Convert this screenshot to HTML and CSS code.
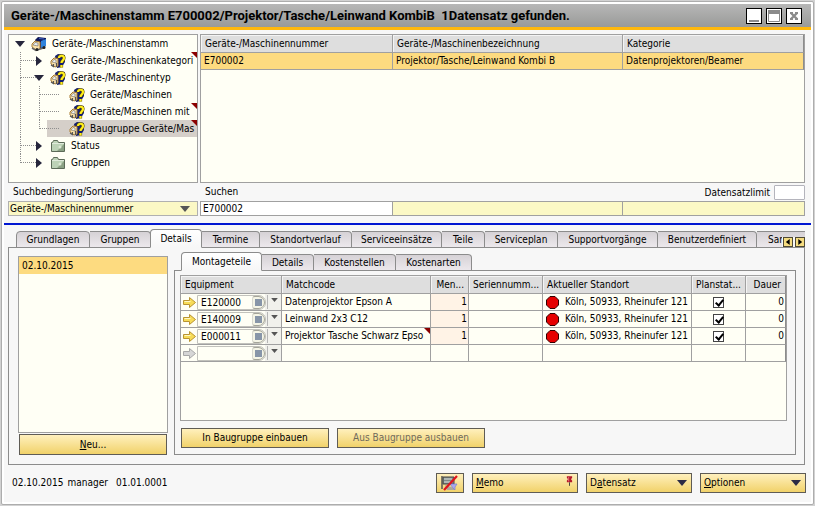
FILE: index.html
```html
<!DOCTYPE html>
<html lang="de">
<head>
<meta charset="utf-8">
<title>Geräte-/Maschinenstamm</title>
<link rel="stylesheet" href="styles.css">
</head>
<body>
<svg class="defs" aria-hidden="true">
  <symbol id="truck" viewBox="0 0 16 16">
    <path d="M4 4 7 1 15 2v8l-6 3-4-3z" fill="#10185a"/>
    <path d="M10 5 15 3v7l-5 2z" fill="#2f83dc"/>
    <path d="M8 2.500 13 3" stroke="#3c62c4"/>
    <path d="M1 8 4 5 9 6v7l-4 1-4-3z" fill="#fbe3ac" stroke="#a87b31"/>
    <path d="M2 9 4 6.500 7 7v3z" fill="#e4edf4" stroke="#74685a" stroke-width=".6"/>
    <path d="M1 12l4 2.500 9-3" fill="none" stroke="#666" stroke-width="1.500"/>
    <circle cx="6" cy="13.500" r="1.500" fill="#222"/><circle cx="13" cy="11.500" r="1.500" fill="#222"/>
  </symbol>
  <symbol id="truckq" viewBox="0 0 16 16">
    <path d="M5 3 8 1l7 1v7l-3 5-5 1z" fill="#16206e"/>
    <path d="M1 8 4 5l4 .5V13l-3 1-4-3z" fill="#fbe3ac" stroke="#a87b31"/>
    <path d="M2 9 4 6.500 6 7v3z" fill="#eef2f4" stroke="#74685a" stroke-width=".6"/>
    <path d="M3.500 11v3M6.500 10v4M1 12l3 2" stroke="#555" stroke-width="1.200"/>
    <path d="M9 5C9 2 14 2 14 5 14 7.500 11.500 7.500 11.500 10M11.500 12v2.500" fill="none" stroke="#5c4d00" stroke-width="3.200"/>
    <path d="M9 5C9 2 14 2 14 5 14 7.500 11.500 7.500 11.500 10M11.500 12v2.500" fill="none" stroke="#ffee1c" stroke-width="2.200"/>
  </symbol>
  <symbol id="folder" viewBox="0 0 16 16">
    <path d="M1.500 4.500h1l1-2h4l1 2h6v9h-13z" fill="#bcd2b6" stroke="#5c6b58"/>
    <path d="M7 13 14 6v7z" fill="#8ba184"/><path d="M2 5.500h12" stroke="#dfeadb"/>
    <circle cx="10" cy="9" r="1.500" fill="#dce8d4"/>
  </symbol>
  <symbol id="down" viewBox="0 0 10 6"><path d="M0 0h10L5 6z" fill="currentColor"/></symbol>
  <symbol id="right" viewBox="0 0 6 10"><path d="M0 0 6 5 0 10z" fill="currentColor"/></symbol>
  <symbol id="link" viewBox="0 0 13 11"><path d="M.5 3.500h6v-3l6 5-6 5v-3h-6z" fill="currentColor" stroke="#b99432"/><path d="M1.500 4.500h6" stroke="#fff8c4"/></symbol>
  <symbol id="linkoff" viewBox="0 0 13 11"><path d="M.5 3.500h6v-3l6 5-6 5v-3h-6z" fill="#d6d6d6" stroke="#a8a8a8"/></symbol>
  <symbol id="stop" viewBox="0 0 13 13"><path d="M4 .5h5L12.500 4v5L9 12.500H4L.5 9V4z" fill="#e60000" stroke="#300"/></symbol>
</svg>

<main class="window">
  <header class="titlebar">
    <h1>Geräte-/Maschinenstamm E700002/Projektor/Tasche/Leinwand KombiB&nbsp; 1Datensatz gefunden.</h1>
    <div class="controls">
      <button type="button" aria-label="Minimieren"><svg viewBox="0 0 14 14"><path d="M2 11h10v2H2z" fill="#8b8b8b"/></svg></button>
      <button type="button" aria-label="Maximieren"><svg viewBox="0 0 14 14"><path d="M1.500 1.500h11v11h-11z" fill="none" stroke="#8b8b8b"/><path d="M1 1h12v4H1z" fill="#8b8b8b"/></svg></button>
      <button type="button" aria-label="Schließen"><svg viewBox="0 0 14 14"><path d="M4 4l6 6M10 4l-6 6" stroke="#8b8b8b" stroke-width="2.400"/><path d="M3 3h3v2H3zM8 3h3v2H8zM3 9h3v2H3zM8 9h3v2H8z" fill="#8b8b8b"/></svg></button>
    </div>
  </header>

  <section class="overview">
    <nav class="tree box" aria-label="Navigation">
      <ul>
        <li><div class="node"><span class="tw"><svg class="down"><use href="#down"/></svg></span><svg class="ico"><use href="#truck"/></svg><span>Geräte-/Maschinenstamm</span></div>
          <ul>
            <li><div class="node more"><span class="tw"><svg class="right"><use href="#right"/></svg></span><svg class="ico"><use href="#truckq"/></svg><span>Geräte-/Maschinenkategori</span></div></li>
            <li><div class="node"><span class="tw"><svg class="down"><use href="#down"/></svg></span><svg class="ico"><use href="#truckq"/></svg><span>Geräte-/Maschinentyp</span></div>
              <ul>
                <li class="leaf"><div class="node"><span class="tw"></span><svg class="ico"><use href="#truckq"/></svg><span>Geräte/Maschinen</span></div></li>
                <li class="leaf"><div class="node more"><span class="tw"></span><svg class="ico"><use href="#truckq"/></svg><span>Geräte/Maschinen mit</span></div></li>
                <li class="leaf"><div class="node more selected"><span class="tw"></span><svg class="ico"><use href="#truckq"/></svg><span>Baugruppe Geräte/Mas</span></div></li>
              </ul>
            </li>
            <li><div class="node"><span class="tw"><svg class="right"><use href="#right"/></svg></span><svg class="ico"><use href="#folder"/></svg><span>Status</span></div></li>
            <li><div class="node"><span class="tw"><svg class="right"><use href="#right"/></svg></span><svg class="ico"><use href="#folder"/></svg><span>Gruppen</span></div></li>
          </ul>
        </li>
      </ul>
    </nav>
    <div class="results box">
      <table>
        <colgroup><col class="c-number"><col class="c-name"><col></colgroup>
        <thead><tr><th>Geräte-/Maschinennummer</th><th>Geräte-/Maschinenbezeichnung</th><th>Kategorie</th></tr></thead>
        <tbody><tr class="hit"><td>E700002</td><td>Projektor/Tasche/Leinwand Kombi B</td><td>Datenprojektoren/Beamer</td></tr></tbody>
      </table>
    </div>

    <label class="caption" for="sort">Suchbedingung/Sortierung</label>
    <div class="caption search-caption">
      <label for="q">Suchen</label>
      <span class="limit"><label for="limit">Datensatzlimit</label><input id="limit" type="text"></span>
    </div>
    <div class="combo"><select id="sort"><option>Geräte-/Maschinennummer</option></select><svg class="down"><use href="#down"/></svg></div>
    <div class="search">
      <input id="q" type="text" value="E700002">
      <input type="text" aria-label="Geräte-/Maschinenbezeichnung" class="tinted">
      <input type="text" aria-label="Kategorie" class="tinted">
    </div>
  </section>

  <section class="detail">
    <div class="tabs main-tabs" role="tablist">
      <button type="button" role="tab">Grundlagen</button>
      <button type="button" role="tab">Gruppen</button>
      <button type="button" role="tab" aria-selected="true">Details</button>
      <button type="button" role="tab">Termine</button>
      <button type="button" role="tab">Standortverlauf</button>
      <button type="button" role="tab">Serviceeinsätze</button>
      <button type="button" role="tab">Teile</button>
      <button type="button" role="tab">Serviceplan</button>
      <button type="button" role="tab">Supportvorgänge</button>
      <button type="button" role="tab">Benutzerdefiniert</button>
      <button type="button" role="tab" class="cut">Sar</button>
      <span class="scroll">
        <button type="button" aria-label="Zurück"><svg viewBox="0 0 7 7"><path d="M5.500 0v7L1 3.500z"/></svg></button>
        <button type="button" aria-label="Weiter"><svg viewBox="0 0 7 7"><path d="M1.500 0v7L6 3.500z"/></svg></button>
      </span>
    </div>

    <div class="panel">
      <div class="dates">
        <ul class="box"><li>02.10.2015</li></ul>
        <button type="button" class="btn"><u>N</u>eu...</button>
      </div>

      <div class="assembly">
        <div class="tabs sub-tabs" role="tablist">
          <button type="button" role="tab" aria-selected="true">Montageteile</button>
          <button type="button" role="tab">Details</button>
          <button type="button" role="tab">Kostenstellen</button>
          <button type="button" role="tab">Kostenarten</button>
        </div>
        <div class="subpanel">
          <div class="parts box">
            <table>
              <colgroup><col class="p-equip"><col class="p-match"><col class="p-qty"><col class="p-serial"><col><col class="p-plan"><col class="p-time"></colgroup>
              <thead><tr><th>Equipment</th><th>Matchcode</th><th class="num">Men...</th><th>Seriennumm...</th><th>Aktueller Standort</th><th>Planstat...</th><th class="num">Dauer</th></tr></thead>
              <tbody>
                <tr>
                  <td class="equip"><div><svg class="link"><use href="#link"/></svg><span class="field"><input type="text" aria-label="Equipment 1" value="E120000"><button type="button" class="pick" aria-label="Auswählen"></button></span><button type="button" class="drop" aria-label="Liste"><svg><use href="#down"/></svg></button></div></td>
                  <td>Datenprojektor Epson A</td><td class="num qty">1</td><td></td>
                  <td><span class="place"><svg><use href="#stop"/></svg>Köln, 50933, Rheinufer 121</span></td>
                  <td class="check"><input type="checkbox" aria-label="Planstatus 1" checked></td><td class="num">0</td>
                </tr>
                <tr>
                  <td class="equip"><div><svg class="link"><use href="#link"/></svg><span class="field"><input type="text" aria-label="Equipment 2" value="E140009"><button type="button" class="pick" aria-label="Auswählen"></button></span><button type="button" class="drop" aria-label="Liste"><svg><use href="#down"/></svg></button></div></td>
                  <td>Leinwand 2x3 C12</td><td class="num qty">1</td><td></td>
                  <td><span class="place"><svg><use href="#stop"/></svg>Köln, 50933, Rheinufer 121</span></td>
                  <td class="check"><input type="checkbox" aria-label="Planstatus 2" checked></td><td class="num">0</td>
                </tr>
                <tr>
                  <td class="equip"><div><svg class="link"><use href="#link"/></svg><span class="field"><input type="text" aria-label="Equipment 3" value="E000011"><button type="button" class="pick" aria-label="Auswählen"></button></span><button type="button" class="drop" aria-label="Liste"><svg><use href="#down"/></svg></button></div></td>
                  <td class="more">Projektor Tasche Schwarz Epso</td><td class="num qty">1</td><td></td>
                  <td><span class="place"><svg><use href="#stop"/></svg>Köln, 50933, Rheinufer 121</span></td>
                  <td class="check"><input type="checkbox" aria-label="Planstatus 3" checked></td><td class="num">0</td>
                </tr>
                <tr>
                  <td class="equip"><div><svg class="link"><use href="#linkoff"/></svg><span class="field"><input type="text" aria-label="Equipment 4"><button type="button" class="pick" aria-label="Auswählen"></button></span><button type="button" class="drop" aria-label="Liste"><svg><use href="#down"/></svg></button></div></td>
                  <td></td><td></td><td></td><td></td><td></td><td></td>
                </tr>
              </tbody>
            </table>
          </div>
          <div class="actions">
            <button type="button" class="btn">In Baugruppe einbauen</button>
            <button type="button" class="btn" disabled>Aus Baugruppe ausbauen</button>
          </div>
        </div>
      </div>
    </div>
  </section>

  <footer class="footer">
    <p><span>02.10.2015</span><span>manager</span><span class="last">01.01.0001</span></p>
    <button type="button" class="btn icon" aria-label="Filter aus">
      <svg viewBox="0 0 18 16"><path d="M1 1v13" stroke="#555" stroke-width="1.500"/><path d="M2 2h11v7H2z" fill="#7f8a88" stroke="#444"/><path d="M3 4h8M3 7h6" stroke="#dfe4e0"/><path d="M4 10l9 3v2H6z" fill="#aaa79a"/><path d="M9 9h7l-2 3v3l-2-2z" fill="#a9a9f0" stroke="#7d7dcc" stroke-width=".7"/><path d="M16 1 3 15" stroke="#e0141e" stroke-width="2.200"/></svg>
    </button>
    <button type="button" class="btn menu"><span><u>M</u>emo</span><svg class="pin" viewBox="0 0 8 11"><path d="M1 0h6v2L6 3v1l1 1v2H1V5l1-1V3L1 2z" fill="#b51a2a"/><path d="M3 1v5" stroke="#ee7781"/><path d="M4 7v4" stroke="#333"/></svg></button>
    <button type="button" class="btn menu"><span>D<u>a</u>tensatz</span><svg class="down"><use href="#down"/></svg></button>
    <button type="button" class="btn menu"><span><u>O</u>ptionen</span><svg class="down"><use href="#down"/></svg></button>
  </footer>
</main>
</body>
</html>
```
FILE: styles.css
```css
:root {
  --line: #a0a0a0;
  --edge: #8c8c8c;
  --face: #f7f7f7;
  --paper: #fffff5;
  --amber: #fddb80;
}
* { box-sizing: border-box; }
body {
  margin: 0;
  padding: 1px;
  min-height: 100vh;
  display: flex;
  background: #d2d2d2;
  color: #000;
  font: 10px/16px "DejaVu Sans Condensed", "DejaVu Sans", sans-serif;
}
button, input, select { font: inherit; color: inherit; margin: 0; border-radius: 0; }
ul, p, h1 { margin: 0; padding: 0; }
ul { list-style: none; }
svg { display: block; flex: none; }
.defs { position: absolute; width: 0; height: 0; }

.window {
  flex: 1;
  min-width: 0;
  display: flex;
  flex-direction: column;
  padding: 2px;
  border: 1px solid #adadad;
  border-radius: 2px;
  background: var(--face);
  box-shadow: inset 0 0 0 2px #fff;
}
.titlebar {
  display: flex;
  align-items: center;
  justify-content: space-between;
  height: 26px;
  padding: 0 9px 0 7px;
  border-bottom: 3px solid #ffb80c;
  background: linear-gradient(#b7b7b7, #999a98);
}
.titlebar h1 { font-family: Roboto, sans-serif; font-size: 13px; font-weight: bold; white-space: nowrap; }
.controls { display: flex; gap: 4px; }
.controls button { width: 16px; height: 16px; padding: 0; border: 1px solid #000; background: #fff; }
.controls svg { width: 14px; height: 14px; }

.box { border: 1px solid var(--line); background: var(--paper); overflow: hidden; }
.down { width: 10px; height: 6px; }
.right { width: 6px; height: 10px; }

.overview {
  display: grid;
  grid-template-columns: 190px 1fr;
  grid-template-rows: 149px 18px 15px;
  column-gap: 2px;
  padding: 4px 6px 7px 4px;
  border-bottom: 2px solid #0016d2;
}

.tree { padding: 0 0 0 3px; color: #000; }
.tree ul ul { padding-left: 19px; }
.tree li { position: relative; }
.node { display: flex; align-items: center; height: 17px; white-space: nowrap; position: relative; }
.node .tw { flex: none; width: 16px; display: flex; justify-content: center; color: #26263c; margin-right: 3px; }
.ico { width: 16px; height: 16px; margin-right: 5px; }
.tree li li::before {
  content: "";
  position: absolute;
  z-index: 1;
  left: -11px;
  top: 0;
  width: 15px;
  height: 8px;
  border-left: 1px dotted #8e8e8e;
  border-bottom: 1px dotted #8e8e8e;
}
.tree li.leaf::before { width: 19px; }
.tree li li:not(:last-child)::after {
  content: "";
  position: absolute;
  left: -11px;
  top: 8px;
  bottom: 0;
  border-left: 1px dotted #8e8e8e;
}
.node.selected { margin-left: -3px; padding-left: 3px; background: #d5cfc9; }
.more { position: relative; }
.more::after {
  content: "";
  position: absolute;
  right: 0;
  top: 0;
  border-top: 6px solid #8b0000;
  border-left: 6px solid transparent;
}

table { width: 100%; border-collapse: separate; border-spacing: 0; table-layout: fixed; }
th, td {
  height: 17px;
  padding: 0 3px;
  border-right: 1px solid var(--line);
  border-bottom: 1px solid var(--line);
  text-align: left;
  font-weight: normal;
  white-space: nowrap;
  overflow: hidden;
  line-height: 16px;
}
th { height: 18px; padding: 0 0 0 4px; background: #dedede; box-shadow: inset 1px 1px #f4f4f4; }
th:last-child, td:last-child { border-right-color: var(--edge); }
.hit td { background: var(--amber); }
.c-number { width: 192px; }
.c-name { width: 230px; }

.caption { padding-left: 5px; line-height: 18px; }
.search-caption { display: flex; justify-content: space-between; }
.limit { display: flex; align-items: center; gap: 4px; padding-top: 1px; }
.limit input { width: 31px; height: 15px; padding: 0 2px; border: 1px solid #b4b4bc; border-radius: 1px; background: #fff; }
.combo { display: flex; align-items: center; border: 1px solid #b0b0b0; background: #fbf8c5; padding-right: 7px; color: #555; }
.combo select {
  flex: 1;
  height: 13px;
  padding: 0 1px;
  border: 0;
  background: none;
  appearance: none;
  color: #000;
  line-height: 13px;
}
.search { display: grid; grid-template-columns: 192px 230px 1fr; }
.search input { min-width: 0; height: 15px; padding: 0 2px; border: 1px solid var(--line); border-right-width: 0; background: #fff; line-height: 13px; }
.search input.tinted { background: #fbf8c5; }
.search input:last-child { border-right-width: 1px; }

.detail { flex: 1; display: flex; flex-direction: column; padding: 4px 6px 0 4px; }
.tabs { position: relative; z-index: 1; display: grid; align-items: end; height: 19px; margin-bottom: -1px; }
.main-tabs { grid-template-columns: 74px 61px 51px 58px 92px 90px 43px 73px 100px 99px 1fr; padding-left: 8px; }
.sub-tabs { grid-template-columns: 80px 52px 82px 76px; padding-left: 8px; }
.tabs [role="tab"] {
  height: 17px;
  padding: 0;
  border: 1px solid var(--edge);
  border-left-width: 0;
  border-radius: 0 4px 0 0;
  background: linear-gradient(#d6d2d6, #ece8ec);
  line-height: 13px;
  text-align: center;
  white-space: nowrap;
  overflow: hidden;
}
.tabs [role="tab"]:first-child { border-left-width: 1px; border-radius: 4px 4px 0 0; }
.tabs [aria-selected="true"] {
  height: 19px;
  margin-left: -1px;
  border-left-width: 1px;
  border-bottom-color: var(--face);
  border-radius: 4px 4px 0 0;
  background: linear-gradient(#fff, var(--face));
}
.tabs .cut { text-align: left; padding-left: 11px; border-right-width: 0; border-radius: 0; }
.scroll { position: absolute; right: 0; bottom: 1px; display: flex; gap: 2px; padding-left: 1px; background: var(--face); }
.scroll button { width: 10px; height: 10px; padding: 0 1px; border: 1px solid #4f4a35; background: #f5dc80; }
.scroll svg { width: 6px; height: 8px; }

.panel {
  flex: 1;
  display: grid;
  grid-template-columns: 150px 1fr;
  column-gap: 6px;
  padding: 4px 8px 9px 9px;
  border: 1px solid var(--edge);
}
.dates { display: flex; flex-direction: column; padding-top: 4px; }
.dates ul { flex: 1; padding: 0; }
.dates li { height: 17px; padding-left: 3px; line-height: 17px; background: var(--amber); }
.dates .btn { height: 21px; margin: 1px 1px 0; }
.assembly { min-width: 0; display: flex; flex-direction: column; }
.subpanel { flex: 1; display: flex; flex-direction: column; padding: 4px 8px 6px 5px; border: 1px solid var(--edge); }
.parts { flex: 1; }
.p-equip { width: 101px; }
.p-match { width: 149px; }
.p-qty { width: 38px; }
.p-serial { width: 74px; }
.p-plan { width: 54px; }
.p-time { width: 40px; }
.num { text-align: right; padding-right: 1px; }
th.num { padding-right: 4px; }
.qty { background: #fff3e6; }
.equip { padding: 0; background: #f1f1ec; }
.equip > div { display: flex; align-items: center; height: 16px; padding-left: 2px; background: linear-gradient(90deg, var(--paper) 84px, transparent 84px); }
.link { width: 13px; height: 11px; color: #f7dc57; margin-right: 1px; }
.field { display: flex; width: 69px; height: 15px; border: 1px solid #c2c2bc; background: var(--paper); border-radius: 0 7px 7px 0; }
.field input { flex: 1; min-width: 0; padding: 0 3px; border: 0; background: none; line-height: 13px; }
.pick { width: 13px; height: 13px; padding: 0; border: 1px solid #a5a59a; border-left-color: #d8d8d0; border-radius: 3px 7px 7px 3px; background: linear-gradient(#8795a8, #8795a8) center/7px 7px no-repeat #f5f5e6; }
.drop { display: flex; width: 12px; height: 14px; margin-left: 1px; padding: 3px 0 0 3px; border: 0; border-left: 1px solid #b5b5b5; background: none; color: #555; }
.drop svg { width: 7px; height: 4px; }
.place { display: flex; align-items: center; gap: 6px; }
.place svg { width: 13px; height: 13px; }
.check { text-align: center; }
.check input {
  appearance: none;
  display: block;
  width: 11px;
  height: 11px;
  margin: 0 auto;
  border: 1px solid #444;
  background: #fff;
  position: relative;
}
.check input:checked::after {
  content: "";
  position: absolute;
  left: 3px;
  top: 0;
  width: 3px;
  height: 6px;
  border: solid #000;
  border-width: 0 2px 2px 0;
  transform: rotate(40deg);
}

.btn {
  height: 20px;
  padding: 0 3px;
  border: 1px solid #5f5c55;
  background: linear-gradient(#fff0bd, #f1d26a);
  line-height: 16px;
  white-space: nowrap;
}
.btn:disabled { color: #6f6a5c; }
.actions { display: flex; gap: 8px; padding: 7px 0 0 1px; }
.actions .btn { width: 148px; }

.footer { display: flex; align-items: center; gap: 8px; padding: 8px 5px 9px 8px; }
.footer p { flex: 1; display: flex; gap: 4px; }
.footer .last { margin-left: 4px; }
.icon { width: 28px; display: flex; align-items: center; justify-content: center; }
.icon svg { width: 18px; height: 16px; }
.menu { width: 106px; display: flex; align-items: center; justify-content: space-between; padding-right: 4px; color: #000; }
.menu .down { color: #2b2b45; }
.pin { width: 7px; height: 10px; align-self: flex-start; margin-top: 2px; }
```
